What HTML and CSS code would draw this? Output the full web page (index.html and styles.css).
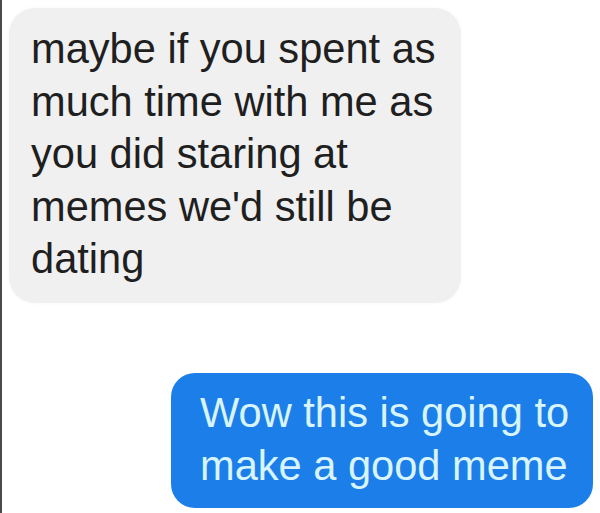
FILE: index.html
```html
<!DOCTYPE html>
<html>
<head>
<meta charset="utf-8">
<link rel="stylesheet" href="styles.css">
</head>
<body>
<div class="thread">
  <div class="bubble received">maybe if you spent as<br>much time with me as<br>you did staring at<br>memes we'd still be<br>dating</div>
  <div class="bubble sent">Wow this is going to<br>make a good meme</div>
</div>
</body>
</html>
```
FILE: styles.css
```css
html, body {
  margin: 0;
  padding: 0;
  background: #ffffff;
}
.thread {
  width: 600px;
  height: 513px;
  box-sizing: border-box;
  border-left: 2px solid #4a4a4a;
  display: flex;
  flex-direction: column;
  padding: 8px 7px 0 7px;
  font-family: "Liberation Sans", Arial, sans-serif;
  font-size: 41.6px;
  line-height: 52.5px;
  overflow: hidden;
}
.bubble {
  box-sizing: border-box;
  white-space: nowrap;
}
.received {
  align-self: flex-start;
  width: 452px;
  height: 295px;
  background: #f0f0f1;
  color: #1f1f1f;
  border-radius: 26px;
  padding: 15px 10px 0 22px;
  box-shadow: 0 0 4px rgba(0,0,0,0.03);
}
.sent {
  align-self: flex-end;
  margin-top: 70px;
  width: 422px;
  height: 135px;
  background: #1c7fe9;
  color: #d8f4fc;
  border-radius: 24px;
  padding: 14px 10px 0 29px;
}
```
